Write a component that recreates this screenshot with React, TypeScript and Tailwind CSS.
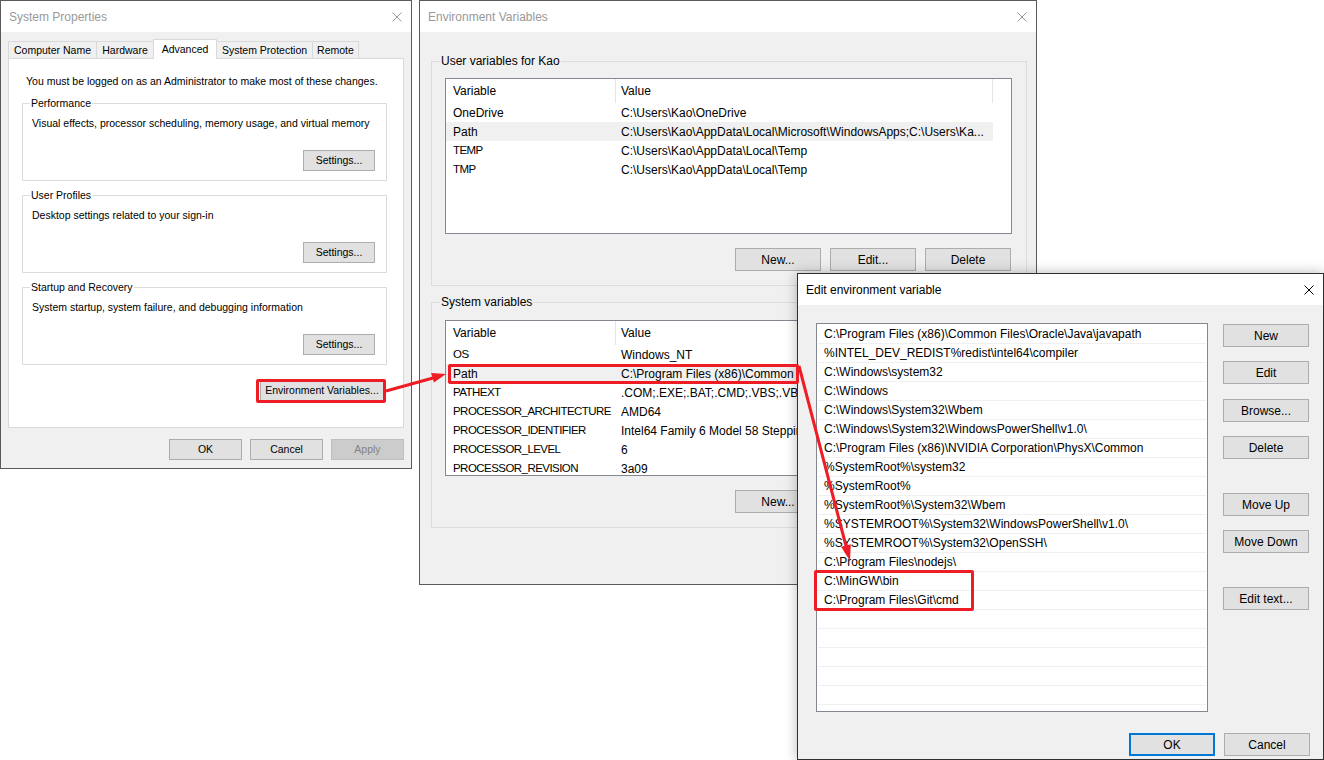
import React from 'react';

type Variant = 'normal' | 'disabled' | 'default';

const CloseIcon = ({ color }: { color: string }) => (
  <svg width="10" height="10" viewBox="0 0 10 10" className="block">
    <path d="M0.5 0.5L9.5 9.5M9.5 0.5L0.5 9.5" stroke={color} strokeWidth="1" />
  </svg>
);

const TitleBar = ({ title, active }: { title: string; active?: boolean }) => (
  <div className="h-[31px] shrink-0 bg-white flex items-center justify-between pl-[8px] pr-[9px] text-[12px]">
    <span className={active ? 'text-black' : 'text-[#999999]'}>{title}</span>
    <CloseIcon color={active ? '#000000' : '#999999'} />
  </div>
);

const WinButton = ({
  label,
  className = '',
  variant = 'normal',
}: {
  label: string;
  className?: string;
  variant?: Variant;
}) => {
  const look =
    variant === 'disabled'
      ? 'bg-[#cccccc] border border-[#bfbfbf] text-[#838383]'
      : variant === 'default'
      ? 'bg-[#e1e1e1] border-2 border-[#0078d7] text-black'
      : 'bg-[#e1e1e1] border border-[#adadad] text-black';
  return (
    <div className={`shrink-0 flex items-center justify-center whitespace-nowrap ${look} ${className}`}>
      {label}
    </div>
  );
};

const Group = ({
  legend,
  legendClass,
  className,
  children,
}: {
  legend: string;
  legendClass: string;
  className: string;
  children: React.ReactNode;
}) => (
  <div className={`relative shrink-0 border border-[#dcdcdc] ${className}`}>
    <span className={`absolute -top-[8px] px-[1px] leading-[14px] whitespace-nowrap ${legendClass}`}>
      {legend}
    </span>
    {children}
  </div>
);

const tabs = [
  { label: 'Computer Name', w: 'w-[89px]' },
  { label: 'Hardware', w: 'w-[58px]' },
  { label: 'Advanced', w: 'w-[64px]', selected: true },
  { label: 'System Protection', w: 'w-[97px]' },
  { label: 'Remote', w: 'w-[47px]' },
];

const SettingsGroup = ({ legend, text, first }: { legend: string; text: string; first?: boolean }) => (
  <Group
    legend={legend}
    legendClass="left-[7px] bg-white"
    className={`h-[78px] flex flex-col pl-[9px] pt-[12px] ${first ? 'mt-[15px]' : 'mt-[14px]'}`}
  >
    <div className="leading-[14px]">{text}</div>
    <WinButton label="Settings..." className="w-[72px] h-[21px] ml-auto mr-[11px] mt-auto mb-[9px]" />
  </Group>
);

const SystemProperties = () => (
  <div className="absolute left-0 top-0 w-[412px] h-[469px] border border-[#5a5a5a] flex flex-col">
    <TitleBar title="System Properties" />
    <div className="flex-1 bg-[#f0f0f0] flex flex-col text-[10.5px]">
      <div className="mt-[7px] pl-[7px] h-[20px] -mb-px flex items-end relative z-10">
        {tabs.map((t, i) => (
          <div
            key={t.label}
            className={`${t.w} ${i > 0 ? '-ml-px' : ''} flex items-center justify-center border border-b-0 border-[#d9d9d9] whitespace-nowrap ${
              t.selected ? 'h-[20px] bg-white relative z-10' : 'h-[17px] mb-px bg-[#f0f0f0] pt-[2px]'
            }`}
          >
            {t.label}
          </div>
        ))}
      </div>
      <div className="mx-[7px] h-[370px] bg-white border border-[#d9d9d9] flex flex-col pl-[13px] pr-[16px] pt-[15px]">
        <div className="leading-[14px] ml-[4px] whitespace-nowrap">
          You must be logged on as an Administrator to make most of these changes.
        </div>
        <SettingsGroup first legend="Performance" text="Visual effects, processor scheduling, memory usage, and virtual memory" />
        <SettingsGroup legend="User Profiles" text="Desktop settings related to your sign-in" />
        <SettingsGroup legend="Startup and Recovery" text="System startup, system failure, and debugging information" />
        <WinButton label="Environment Variables..." className="w-[124px] h-[21px] mt-[15px] self-end mr-[3px]" />
      </div>
      <div className="mt-[11px] pr-[7px] flex justify-end gap-[8px]">
        <WinButton label="OK" className="w-[73px] h-[21px]" />
        <WinButton label="Cancel" className="w-[73px] h-[21px]" />
        <WinButton label="Apply" variant="disabled" className="w-[73px] h-[21px]" />
      </div>
    </div>
  </div>
);

type Row = { name: string; value: string; hl?: boolean };

const userVars: Row[] = [
  { name: 'OneDrive', value: 'C:\\Users\\Kao\\OneDrive' },
  { name: 'Path', value: 'C:\\Users\\Kao\\AppData\\Local\\Microsoft\\WindowsApps;C:\\Users\\Ka...', hl: true },
  { name: 'TEMP', value: 'C:\\Users\\Kao\\AppData\\Local\\Temp' },
  { name: 'TMP', value: 'C:\\Users\\Kao\\AppData\\Local\\Temp' },
];

const systemVars: Row[] = [
  { name: 'OS', value: 'Windows_NT' },
  { name: 'Path', value: 'C:\\Program Files (x86)\\Common Files\\Oracle\\Java\\javapath;%INTEL_DEV_REDIST%...', hl: true },
  { name: 'PATHEXT', value: '.COM;.EXE;.BAT;.CMD;.VBS;.VBE;.JS;.JSE;.WSF;.WSH;.MSC' },
  { name: 'PROCESSOR_ARCHITECTURE', value: 'AMD64' },
  { name: 'PROCESSOR_IDENTIFIER', value: 'Intel64 Family 6 Model 58 Stepping 9, GenuineIntel' },
  { name: 'PROCESSOR_LEVEL', value: '6' },
  { name: 'PROCESSOR_REVISION', value: '3a09' },
];

const VarList = ({ rows }: { rows: Row[] }) => (
  <div className="w-[567px] h-[156px] shrink-0 bg-white border border-[#828790] overflow-hidden">
    <div className="h-[24px] flex">
      <div className="w-[170px] flex items-center pl-[7px] border-r border-[#e5e5e5]">Variable</div>
      <div className="w-[377px] flex items-center pl-[5px] border-r border-[#e5e5e5]">Value</div>
    </div>
    {rows.map((r) => (
      <div key={r.name} className={`h-[19px] w-[547px] flex items-center ${r.hl ? 'bg-[#f0f0f0]' : ''}`}>
        <div
          className={`w-[170px] shrink-0 pl-[7px] whitespace-nowrap overflow-hidden ${
            r.name === r.name.toUpperCase() ? 'text-[11.5px] tracking-[-0.55px]' : ''
          }`}
        >
          {r.name}
        </div>
        <div className="w-[377px] shrink-0 pl-[5px] whitespace-nowrap overflow-hidden">{r.value}</div>
      </div>
    ))}
  </div>
);

const VarButtons = () => (
  <div className="w-[567px] pr-[1px] mt-[14px] flex justify-end gap-[9px]">
    <WinButton label="New..." className="w-[86px] h-[23px]" />
    <WinButton label="Edit..." className="w-[86px] h-[23px]" />
    <WinButton label="Delete" className="w-[86px] h-[23px]" />
  </div>
);

const EnvironmentVariables = () => (
  <div className="absolute left-[419px] top-0 w-[618px] h-[585px] border border-[#5a5a5a] flex flex-col">
    <TitleBar title="Environment Variables" />
    <div className="flex-1 bg-[#f0f0f0] flex flex-col pl-[11px] text-[12px]">
      <Group legend="User variables for Kao" legendClass="left-[8px] bg-[#f0f0f0]" className="w-[596px] h-[225px] mt-[29px] pl-[13px] pt-[16px]">
        <VarList rows={userVars} />
        <VarButtons />
      </Group>
      <Group legend="System variables" legendClass="left-[8px] bg-[#f0f0f0]" className="w-[596px] h-[226px] mt-[16px] pl-[13px] pt-[17px]">
        <VarList rows={systemVars} />
        <VarButtons />
      </Group>
    </div>
  </div>
);

const pathEntries = [
  'C:\\Program Files (x86)\\Common Files\\Oracle\\Java\\javapath',
  '%INTEL_DEV_REDIST%redist\\intel64\\compiler',
  'C:\\Windows\\system32',
  'C:\\Windows',
  'C:\\Windows\\System32\\Wbem',
  'C:\\Windows\\System32\\WindowsPowerShell\\v1.0\\',
  'C:\\Program Files (x86)\\NVIDIA Corporation\\PhysX\\Common',
  '%SystemRoot%\\system32',
  '%SystemRoot%',
  '%SystemRoot%\\System32\\Wbem',
  '%SYSTEMROOT%\\System32\\WindowsPowerShell\\v1.0\\',
  '%SYSTEMROOT%\\System32\\OpenSSH\\',
  'C:\\Program Files\\nodejs\\',
  'C:\\MinGW\\bin',
  'C:\\Program Files\\Git\\cmd',
  '',
  '',
  '',
  '',
  '',
  '',
];

const EditVariable = () => (
  <div className="absolute left-[797px] top-[273px] w-[527px] h-[487px] border border-[#2f2f2f] flex flex-col shadow-[0_0_12px_rgba(0,0,0,0.28)]">
    <TitleBar title="Edit environment variable" active />
    <div className="flex-1 bg-[#f0f0f0] flex flex-col pl-[18px] pr-[13px] text-[12px]">
      <div className="mt-[18px] flex">
        <div className="w-[392px] h-[389px] shrink-0 bg-white border border-[#828790] overflow-hidden pt-[1px] px-[1px]">
          {pathEntries.map((p, i) => (
            <div key={i} className="h-[19px] border-b border-[#f0f0f0] flex items-center pl-[6px] whitespace-nowrap">
              {p}
            </div>
          ))}
        </div>
        <div className="ml-[15px] w-[86px] flex flex-col">
          <WinButton label="New" className="h-[23px] mt-[1px]" />
          <WinButton label="Edit" className="h-[23px] mt-[14px]" />
          <WinButton label="Browse..." className="h-[23px] mt-[15px]" />
          <WinButton label="Delete" className="h-[23px] mt-[14px]" />
          <WinButton label="Move Up" className="h-[23px] mt-[34px]" />
          <WinButton label="Move Down" className="h-[23px] mt-[14px]" />
          <WinButton label="Edit text..." className="h-[23px] mt-[34px]" />
        </div>
      </div>
      <div className="mt-[21px] flex justify-end gap-[9px]">
        <WinButton label="OK" variant="default" className="w-[86px] h-[23px]" />
        <WinButton label="Cancel" className="w-[86px] h-[23px]" />
      </div>
    </div>
  </div>
);

const Annotations = () => (
  <>
    <div className="absolute left-[256px] top-[379px] w-[130px] h-[24px] border-[3px] border-[#ee1c24] rounded-[2px]" />
    <div className="absolute left-[448px] top-[364px] w-[351px] h-[20px] border-[3px] border-[#ee1c24] rounded-[2px]" />
    <div className="absolute left-[814px] top-[570px] w-[160px] h-[41px] border-[3px] border-[#ee1c24] rounded-[2px]" />
    <svg className="absolute inset-0 pointer-events-none" width="1324" height="760" viewBox="0 0 1324 760">
      <line x1="386" y1="391" x2="433" y2="378" stroke="#ee1c24" strokeWidth="3" />
      <polygon points="446,374 433.9,382.6 431.1,373" fill="#ee1c24" />
      <line x1="799" y1="366" x2="846" y2="546" stroke="#ee1c24" strokeWidth="3" />
      <polygon points="850,561 850.8,544.2 841.1,546.8" fill="#ee1c24" />
    </svg>
  </>
);

export default function App() {
  return (
    <div className="relative w-[1324px] h-[760px] bg-white overflow-hidden font-['Liberation_Sans',Arial,sans-serif] text-black">
      <SystemProperties />
      <EnvironmentVariables />
      <EditVariable />
      <Annotations />
    </div>
  );
}
